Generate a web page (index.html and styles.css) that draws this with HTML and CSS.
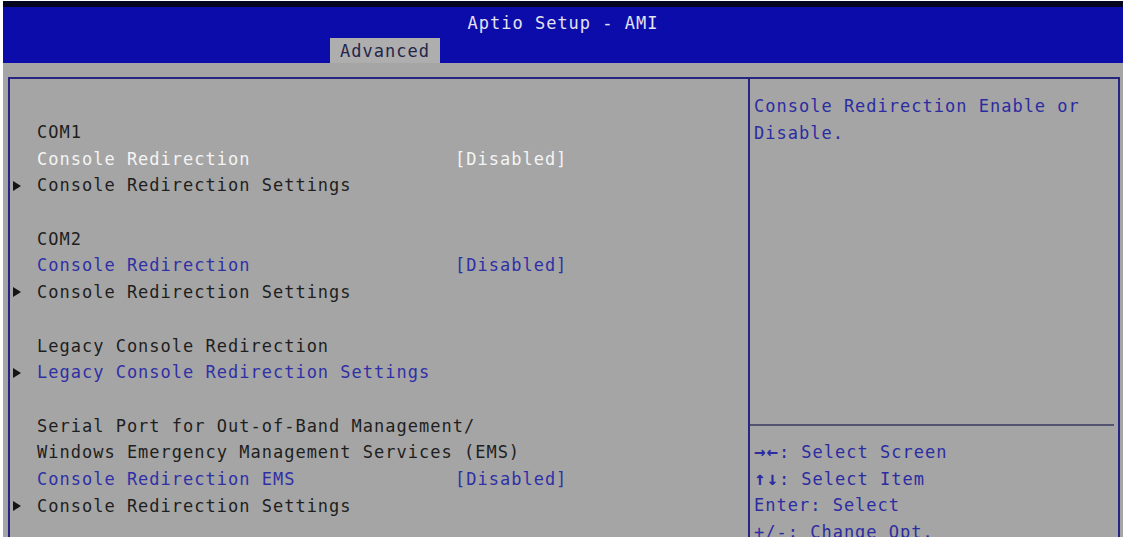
FILE: index.html
```html
<!DOCTYPE html>
<html lang="en">

<head>
	<meta charset="UTF-8">
	<meta name="viewport" content="width=device-width, initial-scale=1.0">
	<link rel="stylesheet" href="styles.css">
</head>

<body>
	<div class="screen">
		<div class="header">
			<div class="title">Aptio Setup - AMI</div>
			<div class="tabs">
				<span class="tab">Advanced</span>
			</div>
		</div>

		<div class="body">
			<div class="frame">
				<div class="menu">
					<div class="row"><span class="mark"></span><span class="label">COM1</span></div>
					<div class="row active"><span class="mark"></span><span class="label">Console Redirection</span><span class="value">[Disabled]</span></div>
					<div class="row"><span class="mark"><i class="arrow"></i></span><span class="label">Console Redirection Settings</span></div>
					<div class="row"></div>
					<div class="row"><span class="mark"></span><span class="label">COM2</span></div>
					<div class="row link"><span class="mark"></span><span class="label">Console Redirection</span><span class="value">[Disabled]</span></div>
					<div class="row"><span class="mark"><i class="arrow"></i></span><span class="label">Console Redirection Settings</span></div>
					<div class="row"></div>
					<div class="row"><span class="mark"></span><span class="label">Legacy Console Redirection</span></div>
					<div class="row link"><span class="mark"><i class="arrow"></i></span><span class="label">Legacy Console Redirection Settings</span></div>
					<div class="row"></div>
					<div class="row"><span class="mark"></span><span class="label wide">Serial Port for Out-of-Band Management/</span></div>
					<div class="row"><span class="mark"></span><span class="label wide">Windows Emergency Management Services (EMS)</span></div>
					<div class="row link"><span class="mark"></span><span class="label">Console Redirection EMS</span><span class="value">[Disabled]</span></div>
					<div class="row"><span class="mark"><i class="arrow"></i></span><span class="label">Console Redirection Settings</span></div>
				</div>

				<div class="side">
					<div class="help">Console Redirection Enable or Disable.</div>
					<div class="keys">
						<div class="key"><b>&rarr;&larr;</b>: Select Screen</div>
						<div class="key"><b>&uarr;&darr;</b>: Select Item</div>
						<div class="key">Enter: Select</div>
						<div class="key">+/-: Change Opt.</div>
					</div>
				</div>
			</div>
		</div>
	</div>
</body>

</html>
```

FILE: styles.css
```css
* {
	margin: 0;
	padding: 0;
	box-sizing: border-box;
}

body {
	background: #ffffff;
	font-family: "DejaVu Sans Mono", "Liberation Mono", monospace;
	font-size: 17px;
	letter-spacing: 1px;
}

.screen {
	margin: 1px 3px 0 3px;
	height: 536px;
	overflow: hidden;
	background: #a5a5a5;
	display: flex;
	flex-direction: column;
}

.header {
	border-top: 6px solid #050520;
	background: #0c0cab;
	height: 62px;
}

.title {
	height: 31px;
	padding-top: 2px;
	line-height: 29px;
	text-align: center;
	color: #e2e2f0;
}

.tabs {
	display: flex;
	padding-left: 327px;
}

.tab {
	height: 25px;
	width: 110px;
	line-height: 26px;
	padding-left: 10px;
	background: #aeaeae;
	color: #25254a;
}

.body {
	flex: 1;
	padding: 14px 3px 0 5px;
	display: flex;
}

.frame {
	flex: 1;
	border: 2px solid #262682;
	border-bottom: none;
	display: grid;
	grid-template-columns: 740px 1fr;
}

.menu {
	border-right: 2px solid #262682;
	padding-top: 40px;
}

.row {
	display: flex;
	height: 26.7px;
	line-height: 26.7px;
	color: #1e1e1e;
	white-space: nowrap;
}

.mark {
	width: 27px;
	display: flex;
	align-items: center;
	padding-left: 3px;
}

.arrow {
	width: 0;
	height: 0;
	border-top: 5px solid transparent;
	border-bottom: 5px solid transparent;
	border-left: 8px solid #151515;
}

.label {
	width: 418px;
}

.label.wide {
	width: auto;
}

.active {
	color: #f4f4f4;
}

.link {
	color: #3030a6;
}

.side {
	display: flex;
	flex-direction: column;
	color: #2c2ca2;
}

.help {
	height: 347px;
	padding: 14px 10px 0 4px;
	line-height: 26.7px;
	border-bottom: 2px solid #545470;
	margin-right: 4px;
}

.keys {
	padding: 13px 0 0 4px;
}

.key {
	height: 26.5px;
	line-height: 26.5px;
	overflow: hidden;
}

.keys b {
	font-size: 19px;
	line-height: 1;
}
```
